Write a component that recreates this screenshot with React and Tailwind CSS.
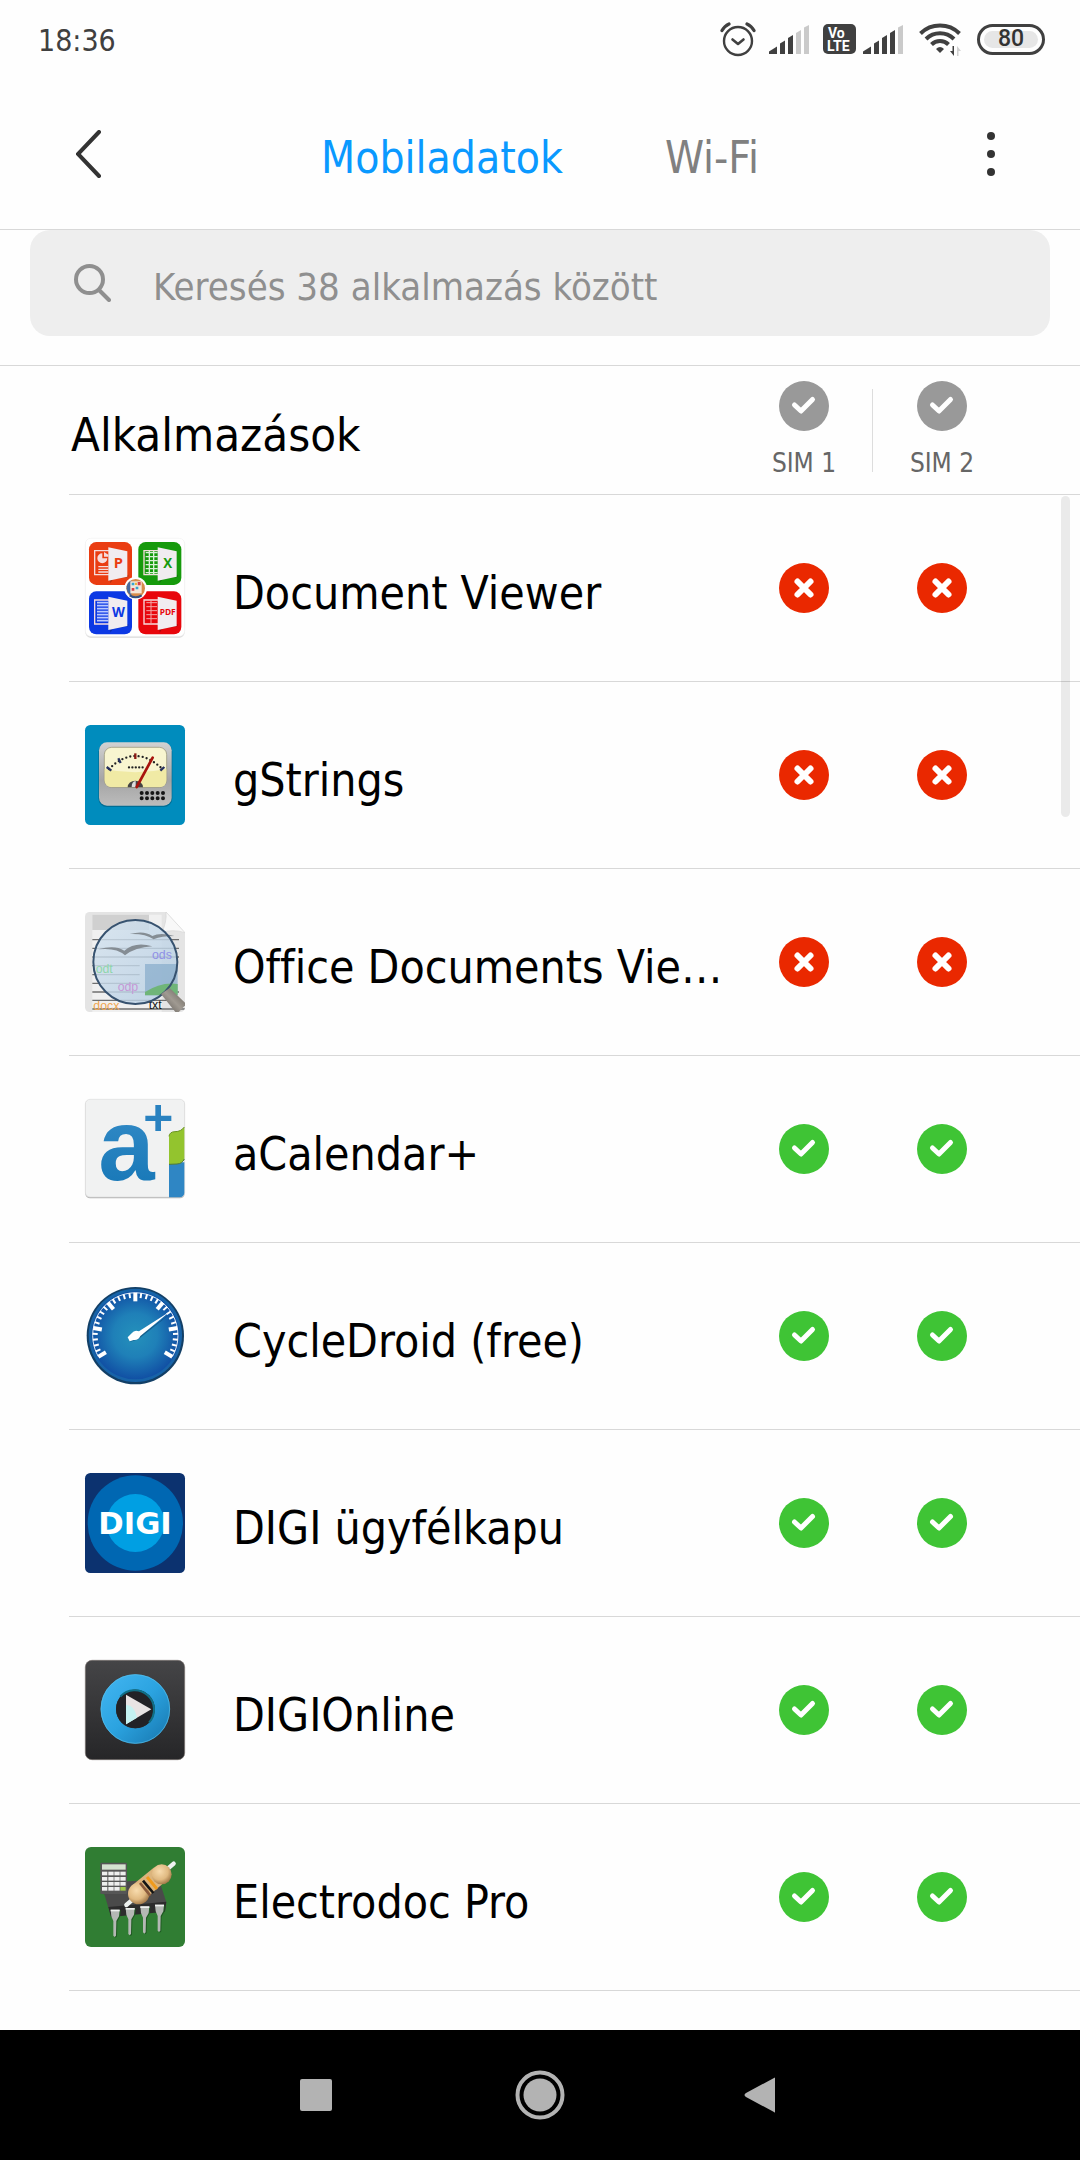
import React, { useState } from 'react';

const FONT = "font-['DejaVu_Sans_Condensed','DejaVu_Sans',sans-serif]";

// Status bar

const AlarmIcon = () => (
  <svg className="w-[36px] h-[36px]" viewBox="0 0 36 36" fill="none" stroke="#404040" strokeLinecap="round">
    <circle cx="18" cy="20" r="14" strokeWidth="2.4" />
    <path d="M12.5 18.5l5.5 4.5 5.5-4.5" strokeWidth="2.6" strokeLinejoin="round" />
    <path d="M2 9.5Q4.500 5 9 3" strokeWidth="3.200" />
    <path d="M34 9.5Q31.500 5 27 3" strokeWidth="3.200" />
  </svg>
);

const SignalIcon = ({ level }) => {
  const bars = [
    'M0 29V26.500L8 21.500V29z',
    'M11 29V18.500L16 15.500V29z',
    'M19 29V13L24 10V29z',
    'M27 29V8L32 5V29z',
    'M35 29V2.500L40 0V29z'
  ];

  return (
    <svg className="w-[40px] h-[29px]" viewBox="0 0 40 29">
      {bars.map((d, i) => (
        <path key={d} d={d} fill={i < level ? '#404040' : '#cacaca'} />
      ))}
    </svg>
  );
};

const VolteIcon = () => (
  <svg className="w-[33px] h-[30px]" viewBox="0 0 33 30" fontFamily="Roboto, sans-serif" fontWeight="700" fill="#fff">
    <rect width="33" height="30" rx="5" fill="#404040" />
    <text x="5" y="14" fontSize="14">Vo</text>
    <text x="4" y="27" fontSize="14">LTE</text>
  </svg>
);

const WifiIcon = () => (
  <svg className="w-[42px] h-[34px]" viewBox="0 0 42 34" fill="none" stroke="#404040" strokeWidth="4">
    <path d="M1.500 11.500A28 28 0 0 1 40.500 11.500" />
    <path d="M7 17A20 20 0 0 1 35 17" />
    <path d="M12.500 22.500A12 12 0 0 1 29.500 22.500" />
    <path d="M17 27q4-4 8 0l-4 4z" fill="#404040" stroke="none" />
    <path d="M35 24v10l-4-5h2.500v-5z" fill="#404040" stroke="none" />
    <path d="M38 34V24l4 5h-2.500v5z" fill="#d0d0d0" stroke="none" />
  </svg>
);

const Battery = ({ value }) => (
  <div className="flex w-[68px] h-[31px] p-1 border-[3px] border-[#404040] rounded-full">
    <div className="flex flex-1 items-center justify-center rounded-full bg-[#e6e6e6] font-[Roboto,sans-serif] font-medium text-[23px] leading-6 text-[#333333]">
      {value}
    </div>
  </div>
);

const StatusBar = () => (
  <div className="flex items-center h-[78px] pl-[38px] pr-[35px] text-[#404040]">
    <span className="flex-1 pt-1 text-[30px] leading-9">18:36</span>
    <AlarmIcon />
    <div className="flex items-center ml-[13px]">
      <SignalIcon level={3} />
    </div>
    <div className="flex items-center ml-[14px] gap-[7px]">
      <VolteIcon />
      <SignalIcon level={4} />
    </div>
    <div className="flex items-center ml-4 gap-4">
      <WifiIcon />
      <Battery value={80} />
    </div>
  </div>
);

// App icons, all drawn on a 300x300 grid

const OfficeTile = ({ x, y, color, letter, size, children }) => (
  <g transform={`translate(${x} ${y})`}>
    <rect width="129" height="129" rx="22" fill={color} />
    <path d="M17 26H62V98H17z" fill="none" stroke="#f6dcdc" strokeWidth="4" />
    {children}
    <path d="M58 17L64 124L72 112L118 105V98L60 116z" fill="#000" opacity=".25" />
    <path d="M58 16L115 28V104L58 116z" fill="#f1ecf0" />
    <text x="88" y={size > 30 ? 78 : 71} fontSize={size} fontWeight="700" fontFamily="Open Sans, sans-serif" textAnchor="middle" fill={color}>
      {letter}
    </text>
  </g>
);

const DocumentViewerIcon = () => (
  <>
    <rect x="1" y="3" width="298" height="296" rx="16" fill="#d9d9d9" />
    <rect x="1" y="1" width="298" height="294" rx="16" fill="#fff" stroke="#f2f2f2" strokeWidth="2" />
    <OfficeTile x={12} y={12} color="#ea3d12" letter="P" size={44}>
      <path d="M40 34a15 15 0 1 0 15 15H40z" fill="#f6dcdc" />
      <path d="M45 30v14h13V38z" fill="#f6dcdc" />
      <path d="M28 74H58M28 82H58M28 90H58" stroke="#f6dcdc" strokeWidth="4" />
    </OfficeTile>
    <OfficeTile x={160} y={12} color="#169a0c" letter="X" size={40}>
      <path d="M22 32H58M22 44H58M22 56H58M22 68H58M22 80H58M22 92H58M33 26V98M46 26V98" stroke="#d9f0d6" strokeWidth="4" />
    </OfficeTile>
    <OfficeTile x={12} y={160} color="#0c38e4" letter="W" size={40}>
      <path d="M24 34H58M24 43H58M24 52H58M24 61H58M24 70H58M24 79H58M24 88H58" stroke="#b9c8ff" strokeWidth="5" />
    </OfficeTile>
    <OfficeTile x={160} y={160} color="#e8060c" letter="PDF" size={25}>
      <path d="M24 34H56M24 46H56M24 58H56M24 70H56M24 82H56M38 28V96" stroke="#f2a5a5" strokeWidth="3" />
    </OfficeTile>
    <circle cx="152" cy="151" r="34" fill="#fff" />
    <circle cx="152" cy="151" r="28" fill="#d68b4a" />
    <path d="M125 145a28 28 0 0 1 14-18v46a28 28 0 0 1-14-28z" fill="#4a6b9e" />
    <rect x="136" y="130" width="34" height="36" fill="#f4e6d8" />
    <path d="M140 134h8v8h-8zM152 146h8v8h-8z" fill="#35a5cf" />
    <path d="M158 132h9v10h-9zM140 150h8v8h-8z" fill="#d43f4a" />
    <path d="M150 134h6v7h-6z" fill="#e9b43a" />
    <path d="M134 172Q152 184 170 172" stroke="#33507f" strokeWidth="6" fill="none" />
  </>
);

const GStringsIcon = () => (
  <>
    <defs>
      <linearGradient id="gs-body" x1="0" y1="0" x2="0" y2="1">
        <stop offset="0" stopColor="#d2d2d2" />
        <stop offset=".6" stopColor="#a4a4a4" />
        <stop offset="1" stopColor="#bcbcbc" />
      </linearGradient>
    </defs>
    <rect width="300" height="300" rx="16" fill="#008cbd" />
    <rect x="40" y="54" width="222" height="192" rx="26" fill="#004f6e" opacity=".5" />
    <rect x="42" y="52" width="218" height="190" rx="24" fill="url(#gs-body)" />
    <rect x="58" y="67" width="187" height="120" rx="22" fill="#f8f5d0" stroke="#8f8c70" strokeWidth="2" />
    <path d="M59 132Q150 152 244 132V168a20 20 0 0 1-18 18H78a20 20 0 0 1-19-18z" fill="#f0eaa5" />
    <path d="M72 132Q151 54 232 132" fill="none" stroke="#222" strokeWidth="7" strokeLinecap="round" strokeDasharray="0 12.500" />
    <path d="M65 126l14 11M100 100l7 14M238 126l-12 11" stroke="#27315f" strokeWidth="7" />
    <path d="M151 85v17" stroke="#8c1a14" strokeWidth="7" />
    <path d="M132 127H174" stroke="#222" strokeWidth="7" strokeLinecap="round" strokeDasharray="0 10.200" />
    <path d="M128 187a23 20 0 0 1 46 0z" fill="#444" />
    <path d="M140 186q0-16 12-18v18z" fill="#ddd" />
    <path d="M155 186L203 98" stroke="#a8130d" strokeWidth="8" strokeLinecap="round" />
    <path d="M170 204H236M170 220H236" stroke="#151515" strokeWidth="12" strokeLinecap="round" strokeDasharray="0 16" />
  </>
);

const OfficeDocumentsIcon = () => (
  <>
    <defs>
      <linearGradient id="od-lens" x1="0" y1="0" x2="1" y2="1">
        <stop offset="0" stopColor="#d5e3ef" />
        <stop offset="1" stopColor="#b3cce2" />
      </linearGradient>
      <linearGradient id="od-grip" x1="0" y1="1" x2="1" y2="0">
        <stop offset="0" stopColor="#4f4b46" />
        <stop offset=".5" stopColor="#a09a92" />
        <stop offset="1" stopColor="#5c5852" />
      </linearGradient>
      <clipPath id="od-clip">
        <rect width="300" height="300" rx="14" />
      </clipPath>
    </defs>
    <g clipPath="url(#od-clip)">
      <path d="M0 0H243L300 62V300H0z" fill="#e4e4e4" />
      <path d="M22 8H230V300H22z" fill="#f0f0f0" />
      <path d="M22 8H192V54H22z" fill="#d0d0d0" />
      <path d="M243 0L300 62Q262 50 230 62Q246 30 243 0z" fill="#f8f8f8" stroke="#d4d4d4" strokeWidth="2" />
      <path d="M22 83H282M22 109H282M22 135H282M22 161H164M22 188H164M22 214H164M22 240H282M22 265H282M22 291H300" stroke="#6f6f6f" strokeWidth="4" />
      <circle cx="151" cy="150" r="126" fill="url(#od-lens)" opacity=".82" />
      <path d="M180 156H278V250H180z" fill="#86abcb" opacity=".7" />
      <path d="M180 240Q230 208 278 216V250H180z" fill="#6fb578" />
      <path d="M40 112Q90 98 118 116Q150 88 202 103Q150 106 120 130Q94 106 40 112z" fill="#858d94" />
      <path d="M134 66Q178 54 202 72Q226 60 268 72Q230 72 206 82Q180 64 134 66z" fill="#858d94" />
      <g fontFamily="Liberation Sans, sans-serif" fontSize="37">
        <text x="201" y="140" fill="#8f90e6">ods</text>
        <text x="32" y="184" fill="#8fd6ab">odt</text>
        <text x="98" y="236" fill="#c598d6">odp</text>
        <text x="25" y="293" fill="#f0a650">docx</text>
        <text x="191" y="290" fill="#151515">txt</text>
      </g>
      <circle cx="151" cy="150" r="126" fill="none" stroke="#37526f" strokeWidth="6" />
      <path d="M228 246L254 228L304 276L276 306z" fill="url(#od-grip)" />
    </g>
  </>
);

const ACalendarIcon = () => (
  <>
    <defs>
      <linearGradient id="ac-blue" x1="0" y1="0" x2="0" y2="1">
        <stop offset="0" stopColor="#3a8fca" />
        <stop offset="1" stopColor="#1375b5" />
      </linearGradient>
    </defs>
    <rect x="1" y="3" width="298" height="295" rx="14" fill="#b5b5b5" />
    <rect x="1" y="1" width="298" height="293" rx="14" fill="#f1f2f2" stroke="#dddddd" strokeWidth="2" />
    <text x="40" y="244" fontSize="304" fontWeight="700" fontFamily="Liberation Sans, sans-serif" fill="url(#ac-blue)">a</text>
    <path d="M211 18H228V50H259V66H228V96H211V66H181V50H211z" fill="#2a82c0" />
    <path d="M252 190H298V281a14 14 0 0 1-14 14H252z" fill="#2f86c4" />
    <path d="M252 196V112Q254 98 270 98Q288 98 298 84V180Q292 194 276 195z" fill="#93c42e" />
    <path d="M252 112Q254 98 270 98Q288 98 298 84" fill="none" stroke="#6a9420" strokeWidth="3" />
    <path d="M252 196L276 195Q292 194 298 180" fill="none" stroke="#4f7a3a" strokeWidth="3" />
  </>
);

const CycleDroidIcon = () => {
  const ticks = Array.from({ length: 31 }, (_, i) => ({ angle: -120 + i * 8, major: i % 5 === 0 }));

  return (
    <>
      <defs>
        <radialGradient id="cd-face">
          <stop offset="0" stopColor="#2491bb" />
          <stop offset=".5" stopColor="#1f80b8" />
          <stop offset="1" stopColor="#1150a4" />
        </radialGradient>
      </defs>
      <circle cx="151" cy="149" r="146" fill="#123f66" />
      <circle cx="151" cy="148" r="140" fill="#1763a8" />
      <circle cx="151" cy="148" r="132" fill="url(#cd-face)" />
      <path d="M40 212A128 128 0 1 1 262 212" fill="none" stroke="#d7e8f7" strokeWidth="3" />
      {ticks.map(({ angle, major }) => (
        <path
          key={angle}
          d={major ? 'M151 20V46' : 'M151 20V35'}
          stroke="#fff"
          strokeWidth={major ? 12 : 6}
          transform={`rotate(${angle} 151 148)`}
        />
      ))}
      <path d="M134 168L160 160L258 82L166 148z" fill="#0a3560" opacity=".5" />
      <path d="M128 154L140 142Q148 130 162 136L256 76L166 150Q160 164 146 162L134 166z" fill="#fff" />
    </>
  );
};

const DigiIcon = () => (
  <>
    <rect width="300" height="300" rx="16" fill="#0c326f" />
    <circle cx="151" cy="150" r="143" fill="#0067b2" />
    <circle cx="151" cy="150" r="87" fill="#009fe3" />
    <text x="150" y="184" fontSize="92" fontWeight="700" fontFamily="DejaVu Sans, sans-serif" textAnchor="middle" fill="#fff">DIGI</text>
  </>
);

const DigiOnlineIcon = () => (
  <>
    <defs>
      <linearGradient id="do-bg" x1="0" y1="0" x2="0" y2="1">
        <stop offset="0" stopColor="#454547" />
        <stop offset="1" stopColor="#262628" />
      </linearGradient>
      <linearGradient id="do-ring" x1="0" y1="0" x2="1" y2="1">
        <stop offset="0" stopColor="#3eb2ee" />
        <stop offset=".5" stopColor="#2ba3e0" />
        <stop offset="1" stopColor="#1b7fb8" />
      </linearGradient>
    </defs>
    <rect x="1" y="1" width="298" height="298" rx="20" fill="url(#do-bg)" stroke="#77706d" strokeWidth="2" />
    <circle cx="151" cy="147" r="81" fill="none" stroke="url(#do-ring)" strokeWidth="46" />
    <circle cx="151" cy="147" r="103" fill="none" stroke="#59c0ea" strokeWidth="2" />
    <circle cx="151" cy="147" r="58" fill="#222226" />
    <path d="M106 110A58 58 0 0 1 192 188" fill="none" stroke="#0f6f86" strokeWidth="6" />
    <path d="M123 104L199 148L123 193z" fill="#e9e4e4" />
    <path d="M123 134Q150 136 156 173L123 193z" fill="#c5f2f2" />
  </>
);

const ElectrodocIcon = () => (
  <>
    <defs>
      <radialGradient id="ed-bead" cx=".4" cy=".35" r=".7">
        <stop offset="0" stopColor="#f8dcae" />
        <stop offset=".6" stopColor="#e0b981" />
        <stop offset="1" stopColor="#9a7142" />
      </radialGradient>
    </defs>
    <rect width="300" height="300" rx="18" fill="#307d33" />
    <path d="M58 142L70 106L222 98L244 166L240 190L78 208z" fill="#4a4a4a" />
    <path d="M70 180L244 164L240 194L78 210z" fill="#2c2c2c" />
    {[90, 135, 179, 223].map((x, i) => (
      <g key={x} transform={`translate(${x} ${188 - i * 5})`}>
        <path d="M-13 0H14L12 20L4 34L3 78L-1 82L-5 78V34L-11 20z" fill="#1f5a22" transform="translate(3 2)" />
        <path d="M-13 0H14L12 20L4 34L3 78L-1 82L-5 78V34L-11 20z" fill="#b4b8b4" />
        <path d="M-13 0H14V5H-13z" fill="#eef0ee" />
      </g>
    ))}
    <rect x="46" y="47" width="80" height="94" rx="3" fill="#565656" />
    <rect x="51" y="52" width="71" height="16" fill="#d5e2d0" />
    {[74, 90, 105, 120].map(y =>
      [51, 70, 88, 106].map(x => (
        <rect key={`${x}-${y}`} x={x} y={y} width="16" height="11" fill={x === 106 && y === 120 ? '#9fc84a' : '#eeeeee'} />
      ))
    )}
    <path d="M124 174L140 160M252 62L266 50" stroke="#eef2f0" strokeWidth="13" strokeLinecap="round" />
    <path d="M138 118L206 62L240 104L176 160z" fill="#dcb47c" />
    <circle cx="161" cy="140" r="32" fill="url(#ed-bead)" />
    <circle cx="230" cy="82" r="30" fill="url(#ed-bead)" />
    <path d="M165 108L196 146" stroke="#8a5a3c" strokeWidth="8" />
    <path d="M174 101L205 138" stroke="#141414" strokeWidth="8" />
    <path d="M186 90L216 126" stroke="#f09a1c" strokeWidth="9" />
  </>
);

const AppIcon = ({ icon: Icon }) => (
  <svg className="shrink-0 w-[100px] h-[100px] overflow-visible" viewBox="0 0 300 300" aria-hidden="true">
    <Icon />
  </svg>
);

// Allow / deny toggle

const Toggle = ({ on, color, label, onClick }) => (
  <button type="button" aria-label={label} aria-pressed={on} onClick={onClick} className="shrink-0 cursor-pointer">
    <svg className="w-[50px] h-[50px]" viewBox="0 0 50 50" fill="none" stroke="#fff" strokeLinecap="round">
      <circle cx="25" cy="25" r="25" fill={color} stroke="none" />
      {on ? (
        <path d="M15.500 24L22 30L33.500 18.500" strokeWidth="5" strokeLinejoin="round" />
      ) : (
        <path d="M18.500 18.500L31.500 31.500M31.500 18.500L18.500 31.500" strokeWidth="6" />
      )}
    </svg>
  </button>
);

const APPS = [
  { name: 'Document Viewer', icon: DocumentViewerIcon, allowed: false },
  { name: 'gStrings', icon: GStringsIcon, allowed: false },
  { name: 'Office Documents Vie…', icon: OfficeDocumentsIcon, allowed: false },
  { name: 'aCalendar+', icon: ACalendarIcon, allowed: true },
  { name: 'CycleDroid (free)', icon: CycleDroidIcon, allowed: true },
  { name: 'DIGI ügyfélkapu', icon: DigiIcon, allowed: true },
  { name: 'DIGIOnline', icon: DigiOnlineIcon, allowed: true },
  { name: 'Electrodoc Pro', icon: ElectrodocIcon, allowed: true }
];

const AppRow = ({ app }) => {
  const [sims, setSims] = useState([app.allowed, app.allowed]);

  const toggle = index => setSims(sims.map((on, i) => (i === index ? !on : on)));

  return (
    <li className="flex items-center h-[187px] pl-4 pr-[69px] border-b border-[#d8d8d8]">
      <AppIcon icon={app.icon} />
      <span className="flex-1 min-w-0 ml-12 pt-[10px] truncate text-[46px] leading-[60px] text-black [font-variant-ligatures:none]">
        {app.name}
      </span>
      {sims.map((on, i) => (
        <div key={i} className="flex shrink-0 justify-center w-[138px]">
          <Toggle
            on={on}
            color={on ? '#3fc435' : '#ea2800'}
            label={`${app.name} – SIM ${i + 1}`}
            onClick={() => toggle(i)}
          />
        </div>
      ))}
    </li>
  );
};

const SimColumn = ({ name }) => (
  <div className="flex flex-col shrink-0 items-center w-[138px] pt-[15px] gap-4">
    <Toggle on color="#999999" label={`${name} – összes`} />
    <span className="text-[26px] leading-8 text-[#666666]">{name}</span>
  </div>
);

export default function App() {
  return (
    <div className={`flex flex-col min-h-screen bg-[#fefefe] ${FONT}`}>
      <StatusBar />

      <header className="flex items-center h-[152px] px-[65px] border-b border-[#d8d8d8]">
        <button type="button" aria-label="Vissza" className="flex justify-center w-12">
          <svg className="w-[26px] h-[48px]" viewBox="0 0 26 48" fill="none" stroke="#333333" strokeWidth="4" strokeLinecap="round">
            <path d="M23 2L2 24L23 46" />
          </svg>
        </button>
        <nav className="flex flex-1 justify-center gap-[102px] pt-2 text-[44px] leading-[60px]">
          <button type="button" className="text-[#0a99ff]">Mobiladatok</button>
          <button type="button" className="text-[#808080]">Wi-Fi</button>
        </nav>
        <button type="button" aria-label="Menü" className="flex justify-center w-12">
          <svg className="w-[8px] h-[46px]" viewBox="0 0 8 46" fill="#333333">
            <circle cx="4" cy="5" r="4" />
            <circle cx="4" cy="23" r="4" />
            <circle cx="4" cy="41" r="4" />
          </svg>
        </button>
      </header>

      <div className="px-[30px] pb-[29px] border-b border-[#d8d8d8]">
        <label className="flex items-center h-[106px] px-[44px] gap-[42px] rounded-[20px] bg-[#eeeeee]">
          <svg className="shrink-0 w-[37px] h-[38px]" viewBox="0 0 37 38" fill="none" stroke="#8f8f8f" strokeWidth="4" strokeLinecap="round">
            <circle cx="15.500" cy="15.500" r="13.500" />
            <path d="M25.500 26.500L35 36" />
          </svg>
          <input
            type="text"
            aria-label="Keresés"
            placeholder="Keresés 38 alkalmazás között"
            className="flex-1 min-w-0 pt-2 bg-transparent outline-none text-[38px] leading-[48px] text-black placeholder:text-[#8f8f8f]"
          />
        </label>
      </div>

      <main className="relative flex-1 pl-[69px] pb-[39px]">
        <div className="flex h-[129px] pr-[69px] border-b border-[#d8d8d8]">
          <h1 className="flex-1 self-center pl-[2px] pt-[10px] text-[47px] leading-[60px] text-black">Alkalmazások</h1>
          <SimColumn name="SIM 1" />
          <div className="w-px h-[83px] mt-[23px] -ml-px bg-[#dddddd]" />
          <SimColumn name="SIM 2" />
        </div>
        <ul>
          {APPS.map(app => (
            <AppRow key={app.name} app={app} />
          ))}
        </ul>
        <div className="absolute right-[10px] top-[130px] w-[9px] h-[321px] rounded-full bg-black/8" />
      </main>

      <footer className="flex items-center justify-center h-[130px] gap-[174px] bg-black">
        <button type="button" aria-label="Legutóbbiak" className="flex justify-center w-[50px]">
          <span className="w-8 h-8 rounded-xs bg-[#b3b3b3]" />
        </button>
        <button type="button" aria-label="Kezdőképernyő">
          <svg className="w-[50px] h-[50px]" viewBox="0 0 50 50">
            <circle cx="25" cy="25" r="22.500" fill="none" stroke="#b3b3b3" strokeWidth="4" />
            <circle cx="25" cy="25" r="16.500" fill="#b3b3b3" />
          </svg>
        </button>
        <button type="button" aria-label="Vissza" className="flex justify-start w-[50px]">
          <svg className="w-[36px] h-[36px]" viewBox="0 0 36 36" fill="#b3b3b3">
            <path d="M36 1V35Q36 36 35 35L7 20Q4 18 7 16L35 1Q36 0 36 1z" />
          </svg>
        </button>
      </footer>
    </div>
  );
}
